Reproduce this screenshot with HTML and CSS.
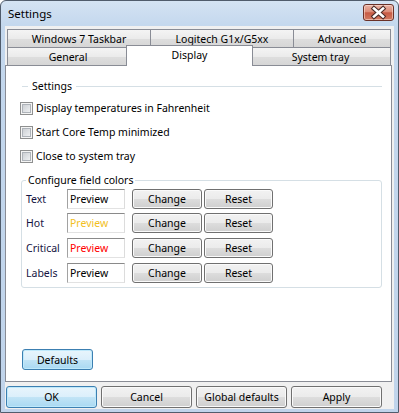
FILE: index.html
```html
<!DOCTYPE html>
<html>
<head>
<meta charset="utf-8">
<title>Settings</title>
<link rel="stylesheet" href="styles.css">
</head>
<body>
<div class="window">
  <div class="titlebar">
    <span class="title">Settings</span>
    <div class="close">
      <svg width="29" height="15" viewBox="0 0 29 15">
        <path d="M10 3.5 L19 11.5 M19 3.5 L10 11.5" stroke="#4a2a26" stroke-width="4.6" stroke-linecap="square"/>
        <path d="M10 3.5 L19 11.5 M19 3.5 L10 11.5" stroke="#ffffff" stroke-width="2.6" stroke-linecap="square"/>
      </svg>
    </div>
  </div>
  <div class="client">
    <div class="tabs">
      <div class="tabrow">
        <div class="tab w144">Windows 7 Taskbar</div>
        <div class="tab w144">Logitech G1x/G5xx</div>
        <div class="tab w98">Advanced</div>
      </div>
      <div class="tabrow">
        <div class="tab w122">General</div>
        <div class="tab sel">Display</div>
        <div class="tab w141">System tray</div>
      </div>
    </div>
    <div class="panel">
      <div class="grouphead"><span>Settings</span></div>
      <div class="check first"><span class="box"><span></span></span><span>Display temperatures in Fahrenheit</span></div>
      <div class="check"><span class="box"><span></span></span><span>Start Core Temp minimized</span></div>
      <div class="check"><span class="box"><span></span></span><span>Close to system tray</span></div>
      <fieldset class="colors">
        <legend>Configure field colors</legend>
        <div class="crow first">
          <span class="lbl">Text</span>
          <span class="field">Preview</span>
          <span class="btn change">Change</span>
          <span class="btn reset">Reset</span>
        </div>
        <div class="crow">
          <span class="lbl">Hot</span>
          <span class="field hot">Preview</span>
          <span class="btn change">Change</span>
          <span class="btn reset">Reset</span>
        </div>
        <div class="crow">
          <span class="lbl">Critical</span>
          <span class="field crit">Preview</span>
          <span class="btn change">Change</span>
          <span class="btn reset">Reset</span>
        </div>
        <div class="crow">
          <span class="lbl">Labels</span>
          <span class="field">Preview</span>
          <span class="btn change">Change</span>
          <span class="btn reset">Reset</span>
        </div>
      </fieldset>
      <span class="btn blue defaults">Defaults</span>
    </div>
    <div class="buttons">
      <span class="btn blue ok">OK</span>
      <span class="btn big">Cancel</span>
      <span class="btn big">Global defaults</span>
      <span class="btn big">Apply</span>
    </div>
  </div>
</div>
</body>
</html>
```
FILE: styles.css
```css
* { box-sizing: border-box; }
html, body { margin: 0; padding: 0; background: #ffffff; }
body {
  font-family: "Noto Sans", sans-serif;
  font-size: 10.5px;
  color: #000;
}
.window {
  width: 399px;
  height: 413px;
  border: 1px solid #505c6c;
  border-radius: 6px 6px 0 0;
  background: linear-gradient(#d4e3f3, #c3d7ed 26px, #c0d4eb);
  display: flex;
  flex-direction: column;
}
.titlebar {
  height: 25px;
  flex: none;
  display: flex;
  align-items: center;
  justify-content: space-between;
  padding: 0 4px 0 7px;
}
.title { font-size: 11.5px; color: #000; }
.close {
  align-self: flex-start;
  margin-top: 3px;
  width: 31px;
  height: 17px;
  border: 1px solid #6a3128;
  border-radius: 3px;
  background: linear-gradient(#eab2a4, #dc8c78 45%, #c75a44 52%, #d27a62);
  box-shadow: inset 0 0 0 1px rgba(255,230,220,0.55);
  display: flex;
  align-items: center;
  justify-content: center;
}
.close svg { display: block; }
.client {
  flex: 1;
  margin: 0 4px 3px 4px;
  background: #f0f0f0;
  display: flex;
  flex-direction: column;
  padding: 3px 2px 1px 0;
}
.tabs { padding-left: 2px; flex: none; }
.tabrow { display: flex; height: 18px; align-items: flex-start; }
.tab {
  height: 18px;
  border: 1px solid #898c95;
  border-bottom: none;
  margin-right: -1px;
  background: linear-gradient(#f4f4f4, #ebebeb 50%, #dedede 51%, #d6d6d6);
  display: flex;
  align-items: center;
  justify-content: center;
  padding-top: 1px;
  white-space: nowrap;
}
.w144 { width: 144px; }
.w98 { width: 98px; }
.w122 { width: 122px; }
.w141 { width: 141px; }
.tab.sel {
  position: relative;
  z-index: 1;
  width: 127px;
  height: 21px;
  margin: -2px -3px 0 -2px;
  background: #ffffff;
  padding-top: 0;
  padding-bottom: 2px;
}
.panel {
  flex: 1;
  border: 1px solid #898c95;
  background: #ffffff;
  display: flex;
  flex-direction: column;
}
.grouphead {
  display: flex;
  align-items: center;
  height: 14px;
  margin: 13px 9px 0 16px;
}
.grouphead::before {
  content: "";
  width: 6px;
  height: 1px;
  background: #d5dfe5;
}
.grouphead::after {
  content: "";
  flex: 1;
  height: 1px;
  background: #d5dfe5;
}
.grouphead span { padding: 0 4px; }
.check {
  display: flex;
  align-items: center;
  height: 24px;
  margin-left: 14px;
  gap: 3px;
}
.check.first { margin-top: 3px; }
.box {
  width: 13px;
  height: 13px;
  border: 1px solid #8e8f8f;
  background: #f4f4f4;
  padding: 1px;
  display: block;
}
.box span {
  display: block;
  width: 9px;
  height: 9px;
  border: 1px solid #aeb3b9;
  background: linear-gradient(135deg, #cdd0d4, #eef0f2);
}
.colors {
  margin: 5px 9px 0 15px;
  border: 1px solid #d5dfe5;
  border-radius: 3px;
  padding: 2px 4px 4px 4px;
  min-width: 0;
}
.colors legend {
  padding: 0 2px;
  line-height: 14px;
}
.crow {
  display: flex;
  align-items: center;
  height: 20px;
}
.crow + .crow { margin-top: 5px; }
.crow.first + .crow { margin-top: 4px; }
.lbl { width: 41px; color: #141442; }
.field {
  width: 58px;
  height: 20px;
  border: 1px solid;
  border-color: #8a8a8a #dcdcdc #e2e2e2 #a2a2a2;
  background: #fff;
  padding-left: 2px;
  display: flex;
  align-items: center;
}
.field.hot { color: #f2bf1f; }
.field.crit { color: #ff0000; }
.btn {
  display: flex;
  align-items: center;
  justify-content: center;
  height: 20px;
  border: 1px solid #707070;
  border-radius: 3px;
  background: linear-gradient(#f2f2f2, #ebebeb 50%, #dddddd 51%, #cfcfcf);
  box-shadow: inset 0 0 0 1px #fafafa;
  white-space: nowrap;
}
.btn.blue {
  border-color: #3c7fb1;
  background: linear-gradient(#e8f5fc, #dbeffb 50%, #c2e4f6 51%, #a9d9f2);
  box-shadow: inset 0 0 0 1px #bfe9fb;
}
.change { width: 70px; margin-left: 7px; }
.reset { width: 69px; margin-left: 2px; }
.defaults {
  width: 71px;
  height: 21px;
  margin: auto 0 11px 16px;
}
.buttons {
  flex: none;
  display: flex;
  gap: 4px;
  margin-top: 4px;
  padding-left: 1px;
}
.buttons .btn { width: 91px; height: 22px; }
```
